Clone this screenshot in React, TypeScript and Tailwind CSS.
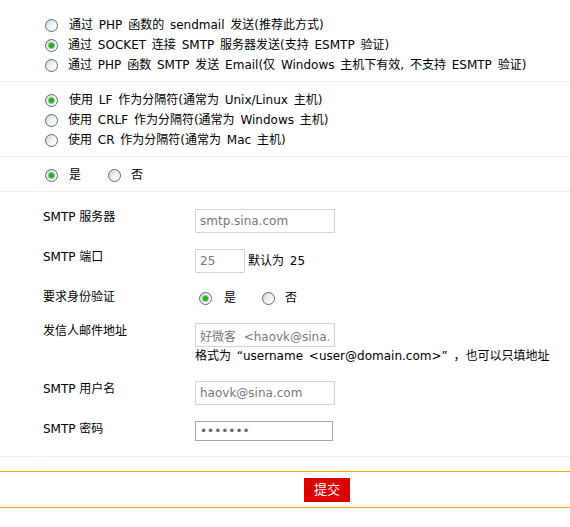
import React from 'react';

const font = "font-['DejaVu_Sans','Noto_Sans_CJK_SC',sans-serif]";

function Radio({ checked = false }: { checked?: boolean }) {
  return (
    <span className="inline-flex h-[13px] w-[13px] shrink-0 items-center justify-center rounded-full border border-[#4f6d84] bg-gradient-to-br from-[#d2d2d2] via-[#f2f2f2] to-white">
      {checked && <span className="h-[5px] w-[5px] rounded-full bg-[#25b025] ring-1 ring-[#1c7a1c]/40" />}
    </span>
  );
}

function Option({ checked, label, indent = false }: { checked?: boolean; label: string; indent?: boolean }) {
  return (
    <div className="flex h-[20px] items-center">
      <Radio checked={checked} />
      <span className={`whitespace-pre ${indent ? 'ml-[11px]' : 'ml-[10px]'}`}>{label}</span>
    </div>
  );
}

// two-cell row: empty narrow cell + content cell, each with its own bottom rule
function Section({ className, children }: { className: string; children: React.ReactNode }) {
  return (
    <div className="flex gap-[2px]">
      <div className="w-[39px] shrink-0 border-b border-[#eeeeee]" />
      <div className={`flex-1 border-b border-[#eeeeee] ${className}`}>{children}</div>
    </div>
  );
}

function Field({ label, children }: { label: string; children: React.ReactNode }) {
  return (
    <div className="grid grid-cols-[152px_1fr] py-[8px]">
      <div className="leading-[16px] [word-spacing:0px]">{label}</div>
      <div>{children}</div>
    </div>
  );
}

const inputCls = 'h-[24px] border border-[#d4d4d4] px-[4px] text-[12px] text-[#777] outline-none bg-white [word-spacing:0px]';

export default function App() {
  return (
    <div className={`w-[570px] min-h-[527px] bg-white text-[12px] text-black [word-spacing:2px] ${font}`}>
      <Section className="pl-[4px] pt-[15px] pb-[6px]">
        <Option indent label="通过 PHP 函数的 sendmail 发送(推荐此方式)" />
        <Option checked label="通过 SOCKET 连接 SMTP 服务器发送(支持 ESMTP 验证)" />
        <Option label="通过 PHP 函数 SMTP 发送 Email(仅 Windows 主机下有效, 不支持 ESMTP 验证)" />
      </Section>

      <Section className="pl-[4px] pt-[8px] pb-[6px]">
        <Option checked indent label="使用 LF 作为分隔符(通常为 Unix/Linux 主机)" />
        <Option label="使用 CRLF 作为分隔符(通常为 Windows 主机)" />
        <Option label="使用 CR 作为分隔符(通常为 Mac 主机)" />
      </Section>

      <Section className="pl-[4px] pt-[8px] pb-[6px]">
        <div className="flex h-[20px] items-center">
          <Radio checked />
          <span className="ml-[11px]">是</span>
          <span className="ml-[27px] flex items-center">
            <Radio />
          </span>
          <span className="ml-[10px]">否</span>
        </div>
      </Section>

      <Section className="pl-[2px] pt-[9px] pb-[7px]">
        <Field label="SMTP 服务器">
          <input readOnly value="smtp.sina.com" className={`${inputCls} w-[140px]`} />
        </Field>
        <Field label="SMTP 端口">
          <div className="flex items-center">
            <input readOnly value="25" className={`${inputCls} w-[50px]`} />
            <span className="ml-[3px]">默认为 25</span>
          </div>
        </Field>
        <Field label="要求身份验证">
          <div className="flex h-[18px] items-center pl-[4px]">
            <Radio checked />
            <span className="ml-[12px]">是</span>
            <span className="ml-[26px] flex items-center">
              <Radio />
            </span>
            <span className="ml-[10px]">否</span>
          </div>
        </Field>
        <Field label="发信人邮件地址">
          <input readOnly value="好微客  <haovk@sina.com>" className={`${inputCls} w-[140px]`} />
          <div className="h-[18px] leading-[18px] whitespace-nowrap">
            格式为<span className="inline-block w-[12px] text-right">“</span>username &lt;user@domain.com&gt;<span className="inline-block w-[12px] text-left">”</span>，也可以只填地址
          </div>
        </Field>
        <Field label="SMTP 用户名">
          <input readOnly value="haovk@sina.com" className={`${inputCls} w-[140px]`} />
        </Field>
        <Field label="SMTP 密码">
          <input
            readOnly
            type="password"
            value="1234567"
            className="h-[20px] w-[138px] border border-[#a5a5a5] px-[4px] text-[12px] text-[#666] outline-none bg-white"
          />
        </Field>
      </Section>

      <div className="mt-[14px] border-y border-[#ffa800] pt-[6px] pb-[5px] pl-[304px]">
        <button className="flex h-[24px] w-[46px] items-center justify-center bg-[#dd0000] text-[13px] text-white">
          提交
        </button>
      </div>
    </div>
  );
}
